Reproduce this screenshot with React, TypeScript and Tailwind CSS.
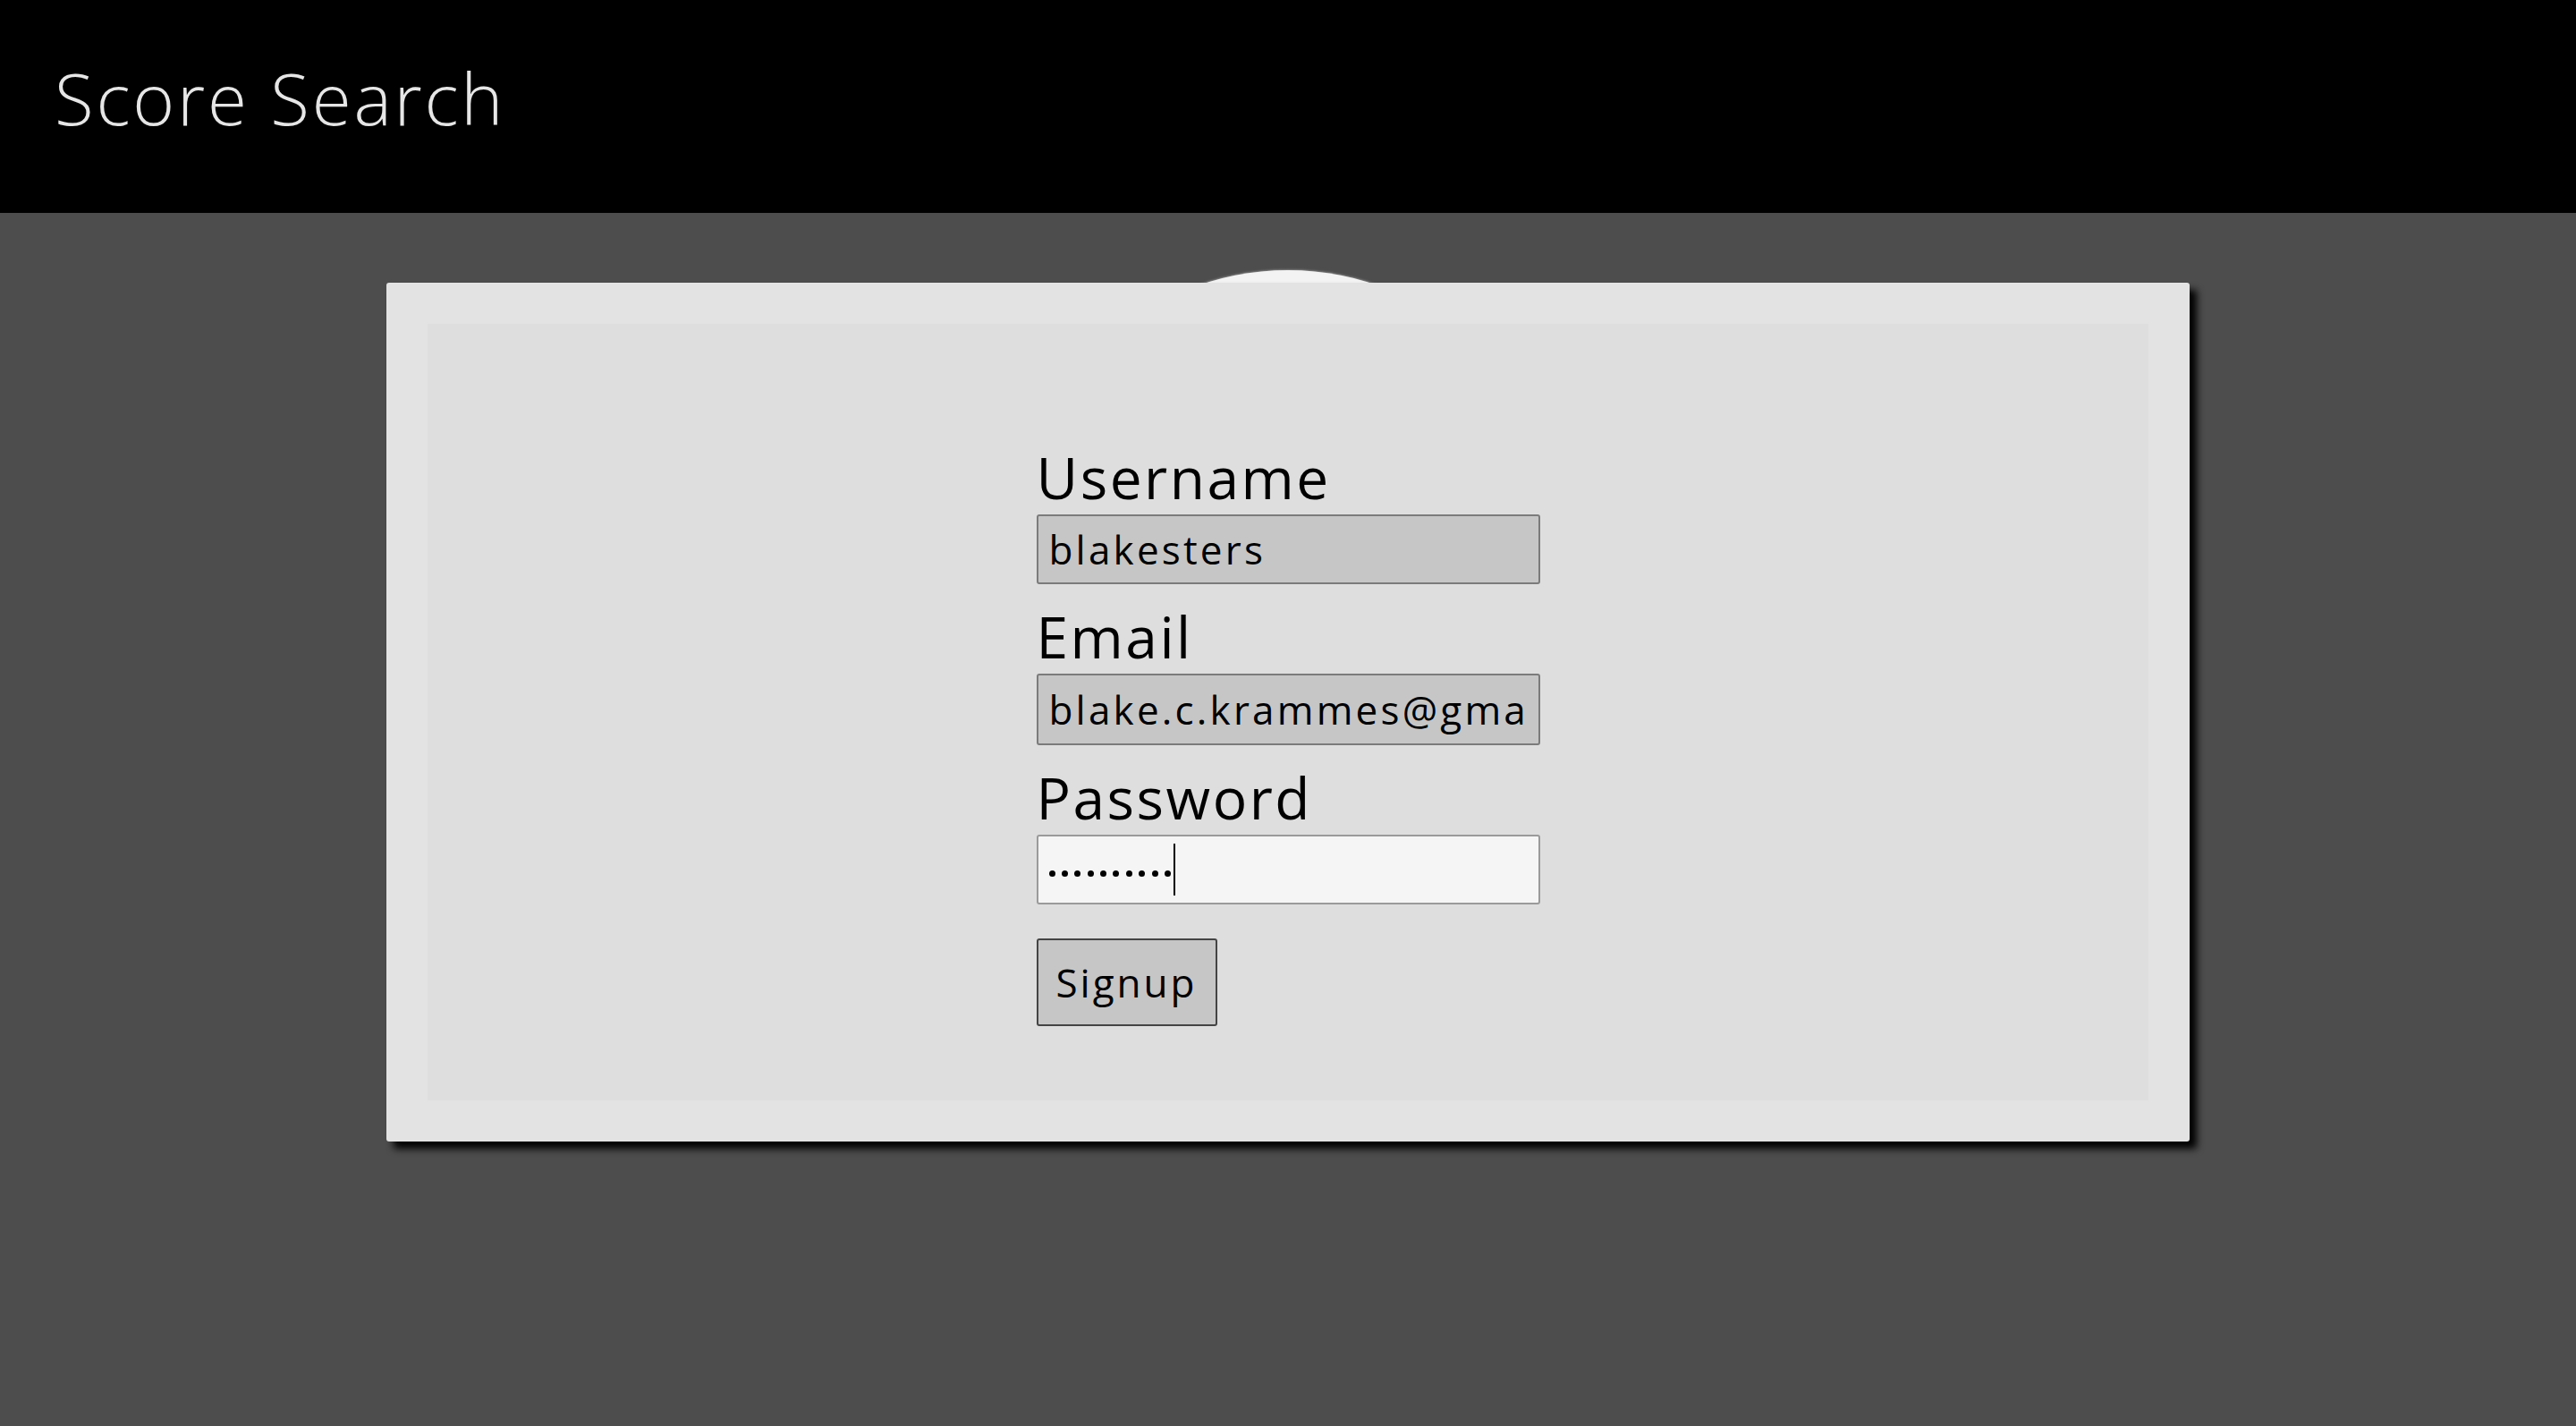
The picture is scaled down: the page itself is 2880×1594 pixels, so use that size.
import React from 'react';

const font = { fontFamily: '"Open Sans", "Noto Sans", sans-serif' };

function Field({ label, children }: { label: string; children: React.ReactNode }) {
  return (
    <div className="flex flex-col">
      <label className="block h-[100px] text-[64px] leading-[118px] tracking-[2.5px] text-black">{label}</label>
      {children}
    </div>
  );
}

export default function App() {
  return (
    <div className="w-full h-[1594px] bg-[#4d4d4d] overflow-hidden" style={font}>
      <header className="h-[238px] bg-black pl-[61px] pt-[69px]">
        <h1 className="text-[80px] leading-[80px] font-light tracking-[2.8px] text-[#e6e6e6]">Score Search</h1>
      </header>

      <main className="relative pt-[78px]">
        {/* avatar disc peeking out behind the card */}
        <div className="absolute top-[64px] left-1/2 -translate-x-1/2 w-[606px] h-[606px] rounded-full bg-[#f3f3f3] shadow-[0_0_3px_rgba(255,255,255,0.6)]" />

        <div className="relative z-10 mx-auto w-[2016px] p-[46px] bg-[#e3e3e3] rounded-[3px] shadow-[8px_8px_9px_#000]">
          <div className="bg-[#dedede] flex flex-col items-center pt-[113px] pb-[83px]">
            <form className="w-[563px] flex flex-col" onSubmit={(e) => e.preventDefault()}>
              <Field label="Username">
                <input
                  readOnly
                  value="blakesters"
                  className="h-[78px] w-full px-[12px] bg-[#c6c6c6] border-2 border-[#7b7b7b] rounded-[3px] text-[44px] tracking-[3.2px] text-black outline-none"
                />
              </Field>
              <Field label="Email">
                <input
                  readOnly
                  value="blake.c.krammes@gmail.com"
                  className="h-[80px] w-full px-[12px] bg-[#c6c6c6] border-2 border-[#7b7b7b] rounded-[3px] text-[44px] tracking-[3.2px] text-black outline-none"
                />
              </Field>
              <Field label="Password">
                <div className="h-[78px] w-full px-[12px] bg-[#f5f5f5] border-2 border-[#9a9a9a] rounded-[3px] flex items-center">
                  <div className="flex items-center gap-[7.4px] mt-[8px]">
                    {Array.from({ length: 10 }).map((_, i) => (
                      <span key={i} className="block w-[7px] h-[7px] rounded-full bg-black" />
                    ))}
                  </div>
                  <span className="block w-[2px] h-[58px] bg-black ml-[3px]" />
                </div>
              </Field>
              <div className="mt-[38px]">
                <button
                  type="submit"
                  className="w-[202px] h-[98px] bg-[#c6c6c6] border-2 border-[#444] rounded-[3px] text-[44px] tracking-[3px] text-black"
                >
                  Signup
                </button>
              </div>
            </form>
          </div>
        </div>
      </main>
    </div>
  );
}
